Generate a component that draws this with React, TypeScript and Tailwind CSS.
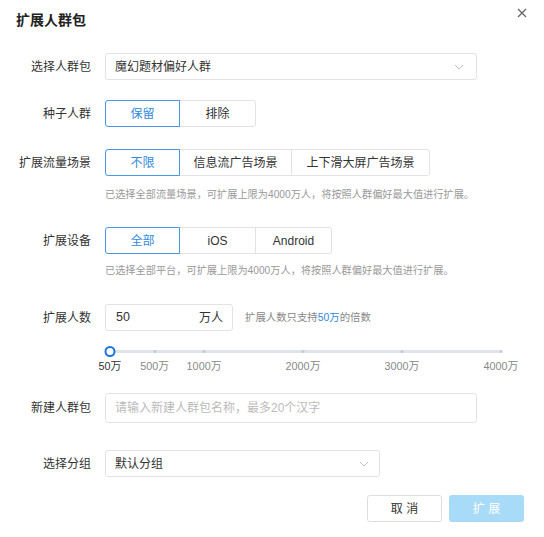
import { useState } from 'react';
import type { ReactNode } from 'react';

const FONT = { fontFamily: '"Liberation Sans", "Noto Sans CJK SC", sans-serif' };

const MARKS = [50, 500, 1000, 2000, 3000, 4000];
const MIN = 50;
const MAX = 4000;

function Chevron() {
    return (
        <svg width="10" height="6" viewBox="0 0 10 6" fill="none">
            <polyline points="1,1 5,5 9,1" stroke="#c0c0c0" strokeWidth="1" />
        </svg>
    );
}

function Row({ label, children, className = '' }: { label: string; children: ReactNode; className?: string }) {
    return (
        <div className={`flex items-center ${className}`}>
            <div className="w-[91px] shrink-0 text-right text-[12px] leading-[16px] text-[#333]">{label}</div>
            <div className="ml-[14px] flex flex-1 items-center">{children}</div>
        </div>
    );
}

function Segmented({ options, value, onChange }: { options: { label: string; w: string }[]; value: number; onChange: (i: number) => void }) {
    return (
        <div className="flex h-[27px]">
            {options.map((o, i) => (
                <button
                    key={o.label}
                    onClick={() => onChange(i)}
                    className={`relative flex h-full items-center justify-center border text-[12px] ${o.w} ${
                        i > 0 ? '-ml-px' : ''
                    } ${i === 0 ? 'rounded-l-[3px]' : ''} ${i === options.length - 1 ? 'rounded-r-[3px]' : ''} ${
                        value === i ? 'z-10 border-[#4a98e4] text-[#2f89e0]' : 'border-[#e2e2e2] text-[#333]'
                    }`}
                >
                    {o.label}
                </button>
            ))}
        </div>
    );
}

export default function App() {
    const [seed, setSeed] = useState(0);
    const [scene, setScene] = useState(0);
    const [device, setDevice] = useState(0);
    const [amount] = useState(50);

    const pct = (v: number) => ((v - MIN) / (MAX - MIN)) * 100;

    return (
        <div className="h-[537px] w-[544px] bg-white" style={FONT}>
            <div className="flex h-[40px] items-start justify-between pl-4 pr-[17px]">
                <h1 className="mt-[10px] text-[14px] font-bold leading-[20px] text-[#222]">扩展人群包</h1>
                <button className="mt-[8px] text-[#666]">
                    <svg width="10" height="10" viewBox="0 0 10 10">
                        <path d="M1 1 L9 9 M9 1 L1 9" stroke="#666" strokeWidth="1.3" />
                    </svg>
                </button>
            </div>

            <Row label="选择人群包" className="mt-[13px]">
                <div className="flex h-[27px] w-[372px] items-center justify-between rounded-[3px] border border-[#e3e3e3] pl-[9px] pr-[12px]">
                    <span className="text-[12px] text-[#333]">魔幻题材偏好人群</span>
                    <Chevron />
                </div>
            </Row>

            <Row label="种子人群" className="mt-[20px]">
                <Segmented
                    options={[
                        { label: '保留', w: 'w-[75px]' },
                        { label: '排除', w: 'w-[77px]' },
                    ]}
                    value={seed}
                    onChange={setSeed}
                />
            </Row>

            <Row label="扩展流量场景" className="mt-[22px]">
                <Segmented
                    options={[
                        { label: '不限', w: 'w-[75px]' },
                        { label: '信息流广告场景', w: 'w-[113px]' },
                        { label: '上下滑大屏广告场景', w: 'w-[139px]' },
                    ]}
                    value={scene}
                    onChange={setScene}
                />
            </Row>
            <p className="mt-[11px] pl-[105px] text-[10.2px] leading-[16px] text-[#999]">
                已选择全部流量场景，可扩展上限为4000万人，将按照人群偏好最大值进行扩展。
            </p>

            <Row label="扩展设备" className="mt-[24px]">
                <Segmented
                    options={[
                        { label: '全部', w: 'w-[75px]' },
                        { label: 'iOS', w: 'w-[77px]' },
                        { label: 'Android', w: 'w-[77px]' },
                    ]}
                    value={device}
                    onChange={setDevice}
                />
            </Row>
            <p className="mt-[9px] pl-[105px] text-[10.2px] leading-[16px] text-[#999]">
                已选择全部平台，可扩展上限为4000万人，将按照人群偏好最大值进行扩展。
            </p>

            <Row label="扩展人数" className="mt-[25px]">
                <div className="flex h-[27px] w-[128px] items-center justify-between rounded-[3px] border border-[#e3e3e3] pl-[10px] pr-[9px]">
                    <span className="text-[12.5px] text-[#333]">{amount}</span>
                    <span className="text-[12px] text-[#333]">万人</span>
                </div>
                <span className="ml-[12px] text-[10.4px] text-[#888]">
                    扩展人数只支持<span className="text-[#2f89e0]">50万</span>的倍数
                </span>
            </Row>

            <div className="relative ml-[110px] mt-[19px] h-[22px] w-[391px]">
                <div className="h-[3px] rounded-full bg-[#dfe3ea]" />
                {MARKS.map((m) => (
                    <div key={m}>
                        <div
                            className="absolute top-[0px] h-[3px] w-[3px] -translate-x-1/2 rounded-full bg-[#c3cad6]"
                            style={{ left: `${pct(m)}%` }}
                        />
                        <span
                            className={`absolute top-[9px] -translate-x-1/2 whitespace-nowrap text-[10.8px] leading-[14px] ${
                                m === amount ? 'text-[#333]' : 'text-[#888]'
                            }`}
                            style={{ left: `${pct(m)}%` }}
                        >
                            {m}万
                        </span>
                    </div>
                ))}
                <div
                    className="absolute top-[-4px] h-[11px] w-[11px] -translate-x-1/2 rounded-full border-[2.5px] border-[#1d72e0] bg-white"
                    style={{ left: `${pct(amount)}%` }}
                />
            </div>

            <Row label="新建人群包" className="mt-[21px]">
                <div className="flex h-[30px] w-[372px] items-center rounded-[3px] border border-[#e3e3e3] pl-[9px]">
                    <span className="text-[12px] text-[#bbb]">请输入新建人群包名称，最多20个汉字</span>
                </div>
            </Row>

            <Row label="选择分组" className="mt-[27px]">
                <div className="flex h-[27px] w-[275px] items-center justify-between rounded-[3px] border border-[#e3e3e3] pl-[9px] pr-[10px]">
                    <span className="text-[12px] text-[#333]">默认分组</span>
                    <Chevron />
                </div>
            </Row>

            <div className="mt-[18px] flex justify-end gap-[7px] pr-[20px]">
                <button className="h-[27px] w-[75px] rounded-[3px] border border-[#dedede] text-[12px] text-[#333]">取 消</button>
                <button className="h-[27px] w-[75px] rounded-[3px] bg-[#a8dbf7] text-[12px] text-white">扩 展</button>
            </div>
        </div>
    );
}
